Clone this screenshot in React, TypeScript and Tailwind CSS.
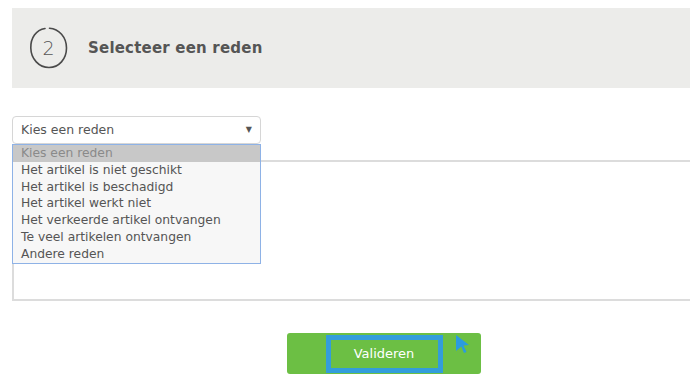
const reasons = [
  "Het artikel is niet geschikt",
  "Het artikel is beschadigd",
  "Het artikel werkt niet",
  "Het verkeerde artikel ontvangen",
  "Te veel artikelen ontvangen",
  "Andere reden",
];

function StepCircle() {
  return (
    <svg width="40" height="46" viewBox="0 0 40 46" className="shrink-0">
      {/* hand drawn ring with a gap on top */}
      <path
        d="M16 3.5 C7 5 1.5 13 1.8 23 C2 34 10 42.5 20 42.5 C30 42.5 37.5 34 37.5 23 C37.5 12 30 3.8 20.5 3.2"
        fill="none"
        stroke="#4a4a4a"
        strokeWidth="1.6"
        strokeLinecap="round"
      />
      <text
        x="19.5"
        y="30"
        textAnchor="middle"
        fontSize="19"
        fontFamily="'DejaVu Sans', sans-serif"
        fontWeight="200"
        fill="#555"
      >
        2
      </text>
    </svg>
  );
}

export default function App() {
  return (
    <div className="w-[690px] h-[388px] overflow-hidden bg-white pl-3 pt-2 font-['DejaVu_Sans',sans-serif]">
      {/* Stap header */}
      <div className="h-20 bg-[#ececea] flex items-center pl-[17px] gap-[19px]">
        <StepCircle />
        <h2 className="text-[15px] font-bold text-[#555] tracking-[0.2px]">Selecteer een reden</h2>
      </div>

      {/* Select met open lijst */}
      <div className="relative mt-7 w-[249px] z-10">
        <div className="h-7 border border-[#d6d6d6] rounded-[4px] bg-white flex items-center justify-between pl-2 pr-2">
          <span className="text-[12.5px] text-[#555]">Kies een reden</span>
          <span className="text-[8px] text-[#555]">▼</span>
        </div>
        <ul className="absolute left-0 top-7 w-full border border-[#8eb2e6] bg-[#f7f7f7] text-[12.3px] leading-[16.8px]">
          <li className="bg-[#c8c8c8] text-[#8a8a8a] pl-2">Kies een reden</li>
          {reasons.map((r) => (
            <li key={r} className="text-[#555] pl-2">
              {r}
            </li>
          ))}
        </ul>
      </div>

      {/* Tekstveld */}
      <div className="mt-4 w-[700px] h-[141px] border-2 border-[#dcdcdc] bg-white" />

      {/* Knop */}
      <div className="mt-8 pl-[275px]">
        <div className="relative w-[194px] h-[41px] bg-[#6cbf44] rounded-[3px] flex items-center justify-center">
          <div className="w-[117px] h-[38px] border-[5px] border-[#339ddb] flex items-center justify-center">
            <span className="text-[13px] text-white">Valideren</span>
          </div>
          <svg
            width="16"
            height="20"
            viewBox="0 0 16 20"
            className="absolute left-[168px] top-px"
          >
            <path d="M1 1 L14 11 L8.5 11.5 L11.5 18 L9 19 L6.3 12.6 L1 17 Z" fill="#2b9be0" />
          </svg>
        </div>
      </div>
    </div>
  );
}
